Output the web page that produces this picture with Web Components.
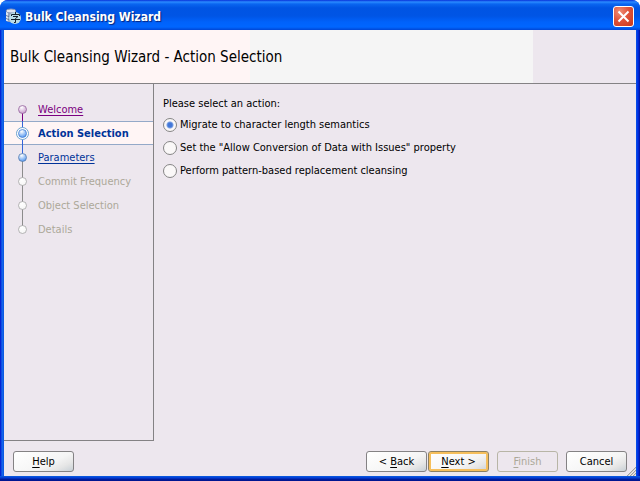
<!DOCTYPE html>
<html lang="en">
<head>
<meta charset="utf-8">
<title>Bulk Cleansing Wizard</title>
<style>
  body { margin: 0; background: #fff; color: #000; font: 11px/15px "DejaVu Sans Condensed", "DejaVu Sans", sans-serif; }
</style>
</head>
<body>
<wizard-window caption="Bulk Cleansing Wizard">
  <wizard-banner slot="banner">Bulk Cleansing Wizard - Action Selection</wizard-banner>
  <step-list slot="steps">
    <step-item state="visited">Welcome</step-item>
    <step-item state="current">Action Selection</step-item>
    <step-item state="next">Parameters</step-item>
    <step-item state="pending">Commit Frequency</step-item>
    <step-item state="pending">Object Selection</step-item>
    <step-item state="last">Details</step-item>
  </step-list>
  <action-options></action-options>
  <wizard-footer slot="footer">
    <wizard-button slot="start"><u>H</u>elp</wizard-button>
    <wizard-button class="back">&lt; <u>B</u>ack</wizard-button>
    <wizard-button kind="default"><u>N</u>ext &gt;</wizard-button>
    <wizard-button disabled><u>F</u>inish</wizard-button>
    <wizard-button>Cancel</wizard-button>
  </wizard-footer>
</wizard-window>

<script>
const define = (name, render) => customElements.define(name, class extends HTMLElement {
  constructor() {
    super();
    this.attachShadow({ mode: "open" });
  }
  connectedCallback() {
    this.shadowRoot.innerHTML = render(this);
  }
});

define("wizard-window", el => `
<style>
  :host { display: grid; grid-template-rows: 30px auto 1fr auto; box-sizing: border-box; min-height: 100vh;
    position: relative; overflow: hidden; border-radius: 8px 8px 0 0; padding: 0 4px 5px;
    background: linear-gradient(90deg, #0019cf 0, #0831d9 1px, #166aee 2px, #0855dd 4px, transparent 4px, transparent calc(100% - 4px), #0855dd calc(100% - 4px), #0440ee calc(100% - 3px), #001dca calc(100% - 1px), #00138c 100%) 0 30px no-repeat, #0046e6; }
  :host::after { content: ""; position: absolute; inset: auto 0 0 0; height: 5px;
    background: linear-gradient(#0855dd 0 1px, #0441d8 1px 2px, #001ea0 3px, #00138c 5px); }
  header { display: flex; align-items: center; gap: 4px; margin: 0 -4px; padding: 3px 6px 0 5px;
    background: linear-gradient(#0831d9 0, #2a8bff 2px, #0a66f0 4px, #0054e3 8px, #0055e5 16px, #0062fb 22px, #0066ff 27px, #0046d5 30px); }
  h1 { flex: 1; margin: 0; color: #fff; font: bold 12px/18px "DejaVu Sans Condensed", "DejaVu Sans", sans-serif; text-shadow: 1px 1px 1px #06247c; }
  .close { width: 21px; height: 21px; padding: 0; border: 1px solid #fff; border-radius: 3px; display: grid; place-items: center;
    background: radial-gradient(circle at 30% 25%, #ef8e75, #e0533a 45%, #c9381b); }
  svg { display: block; }
  .body { display: flex; background: #ede7ee; }
  main { flex: 1; padding: 12px 10px 12px 9px; }
  .bottom { position: relative; background: #ede7ee; }
  .grip { position: absolute; right: 0; bottom: 0; }
</style>
<header>
  <svg width="16" height="18" viewBox="0 0 16 18" aria-hidden="true">
    <path d="M1 3v9c0 3 10 3 10 0V3" fill="#98a5bf"/><path d="M2 4v9" stroke="#dce5f1" stroke-width="2"/>
    <path d="M1 7c0 2 10 2 10 0M1 10c0 2 10 2 10 0" stroke="#60708f" fill="none"/>
    <ellipse cx="6" cy="3" rx="5" ry="2" fill="#e0e5ef" stroke="#8796b8"/>
    <circle cx="10" cy="10" r="6" fill="#b9dce7"/>
    <path d="M10.500 4v2M6.500 8V6.500h8V8M8 8.500h5L10.500 10.500v4H9M6 11.500h9" fill="none" stroke="#15202b"/>
  </svg>
  <h1>${el.getAttribute("caption")}</h1>
  <button class="close" aria-label="Close"><svg width="13" height="13" viewBox="0 0 13 13"><path d="M1.500 1.500l10 10M11.500 1.500l-10 10" stroke="#fff" stroke-width="2"/></svg></button>
</header>
<slot name="banner"></slot>
<div class="body"><slot name="steps"></slot><main><slot></slot></main></div>
<div class="bottom"><slot name="footer"></slot>
  <svg class="grip" width="9" height="9" viewBox="0 0 9 9" aria-hidden="true"><path d="M0 9L9 0M3 9L9 3M6 9L9 6" stroke="#a09fa0" stroke-width="1"/><path d="M1 9L9 1M4 9L9 4M7 9L9 7" stroke="#d6d3c8"/></svg>
</div>`);

define("wizard-banner", () => `
<style>
  :host { display: block; padding: 18px 6px 17px; border-bottom: 1px solid #848284;
    background: linear-gradient(90deg, #fff5f5 0 39%, #f5f5f5 39% 83.700%, #ede7ee 83.700%); }
  h2 { margin: 0; font: 15px/18px "DejaVu Sans Condensed", "DejaVu Sans", sans-serif; }
</style><h2><slot></slot></h2>`);

define("step-list", () => `
<style>
  :host { display: block; box-sizing: border-box; width: 150px; padding-top: 13px; border: solid #848284; border-width: 0 1px 1px 0; }
</style><nav aria-label="Steps"><slot></slot></nav>`);

const marks = {
  visited: ["#c9a0cf", "#8d5a96", "", "#7b0080"],
  current: ["#5b9cf0", "#3c78d0", "#3465d8", "#3465d8"],
  next: ["#5b9cf0", "#5577a8", "#3465d8", "#8c8c8c"],
  pending: ["#f6f6f6", "#9a9a9a", "#8c8c8c", "#8c8c8c"],
  last: ["#f6f6f6", "#9a9a9a", "#8c8c8c", ""]
};
define("step-item", el => {
  const state = el.getAttribute("state");
  const [fill, edge, up, down] = marks[state];
  const link = state === "visited" || state === "next";
  const tag = link ? `a href="#"` : "span";
  return `
<style>
  :host { display: flex; align-items: center; gap: 8px; height: 24px; padding-left: 11px; box-sizing: border-box; color: #aca899; }
  :host([state="current"]) { background: #fff5f5; border: solid #94a9c8; border-width: 1px 0; color: #003399; font-weight: bold; }
  :host([state="visited"]) { color: #7b0080; }
  :host([state="next"]) { color: #003399; }
  svg { display: block; flex: none; }
  a { color: inherit; text-underline-offset: 2px; }
</style>
<svg width="15" height="24" viewBox="0 0 15 24" aria-hidden="true">
  <defs><radialGradient id="g" cx=".4" cy=".25" r=".8"><stop stop-color="#fff"/><stop offset=".9" stop-color="${fill}"/></radialGradient></defs>
  ${up ? `<path d="M7.500 0v12" stroke="${up}"/>` : ""}${down ? `<path d="M7.500 12v12" stroke="${down}"/>` : ""}
  ${state === "current" ? `<circle cx="7.500" cy="12.500" r="6" fill="#fff" stroke="#6ea3cf"/>` : ""}
  <circle cx="7.500" cy="12.500" r="4" fill="url(#g)" stroke="${edge}" stroke-opacity=".7"/>
</svg>
<${tag}><slot></slot></${link ? "a" : "span"}>`;
});

define("action-options", () => `
<style>
  :host { display: block; }
  fieldset { display: grid; gap: 8px; margin: 0; padding: 0; border: 0; }
  legend { padding: 0; margin-bottom: 6px; }
  label { display: flex; align-items: center; gap: 3px; }
  input { appearance: none; box-sizing: border-box; width: 14px; height: 14px; margin: 0; border: 1px solid #858585; border-radius: 50%; background: #faf8f8; }
  input:checked { background: radial-gradient(circle, #4277d8 0 2px, #7ba1e4 3px, #faf8f8 4px); }
</style>
<fieldset>
  <legend>Please select an action:</legend>
  <label><input type="radio" name="action" checked>Migrate to character length semantics</label>
  <label><input type="radio" name="action">Set the "Allow Conversion of Data with Issues" property</label>
  <label><input type="radio" name="action">Perform pattern-based replacement cleansing</label>
</fieldset>`);

define("wizard-footer", () => `
<style>
  :host { display: flex; justify-content: space-between; padding: 10px 9px 4px; }
  .group { display: flex; gap: 8px; }
  ::slotted(.back) { margin-right: -7px; }
</style>
<slot name="start"></slot><div class="group"><slot></slot></div>`);

define("wizard-button", el => `
<style>
  :host { display: block; }
  button { box-sizing: border-box; width: 61px; height: 21px; padding: 0; border: 1px solid #848284; border-radius: 3px;
    background: linear-gradient(155deg, #fff 0, #f5f5f5 60%, #e6e6e6 80%, #c8d0d6); color: #000; font: inherit; }
  button:disabled { border-color: #b8b5a6; background: transparent; color: #aca899; }
  :host([kind="default"]) button { border-color: #8d8060; box-shadow: inset 0 0 0 2px #f6bf5c; }
  ::slotted(u) { text-underline-offset: 2px; }
</style>
<button type="button" ${el.hasAttribute("disabled") ? "disabled" : ""}><slot></slot></button>`);
</script>
</body>
</html>
